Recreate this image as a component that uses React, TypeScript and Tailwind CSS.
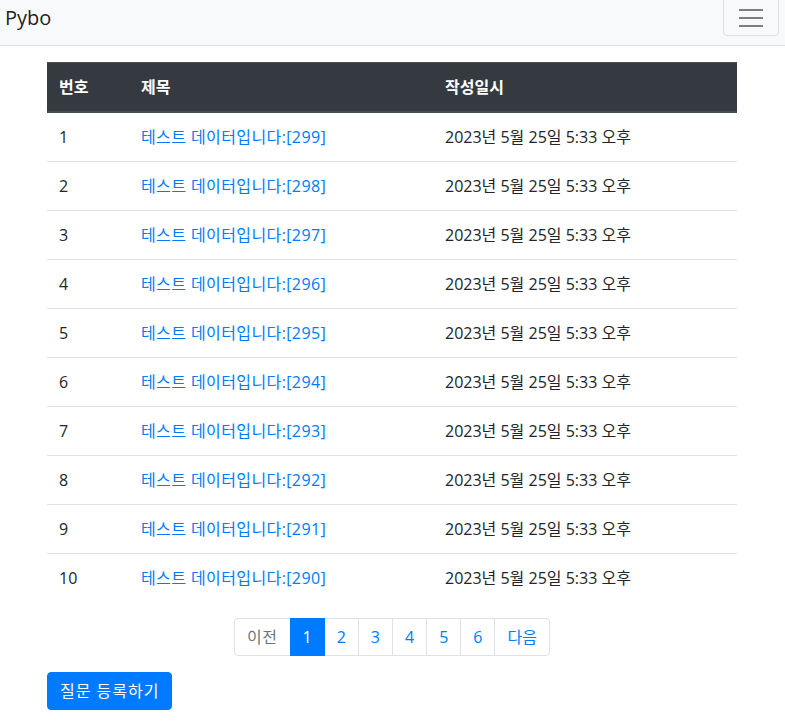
import React from 'react'

const rows = Array.from({ length: 10 }, (_, i) => ({
  no: i + 1,
  subject: `테스트 데이터입니다:[${299 - i}]`,
  date: '2023년 5월 25일 5:33 오후',
}))

const pages = ['1', '2', '3', '4', '5', '6']

export default function App() {
  return (
    <div className="min-h-screen bg-white text-[#212529] text-base leading-6 [font-family:'Open_Sans','Noto_Sans_CJK_KR',sans-serif]">
      {/* Navbar (scrolled a little) */}
      <div className="h-[46px] bg-[#f8f9fa] border-b border-[#dfdfdf] flex items-start justify-between pl-[5px] pr-[6px] overflow-hidden">
        <a className="text-xl leading-[30px] mt-[3px] text-black/90">Pybo</a>
        <button className="w-[56px] h-[40px] -mt-[4px] border border-black/10 rounded flex flex-col items-center justify-center gap-[6px] pt-[4px]">
          <span className="block w-[24px] h-[2px] bg-[#7f7f7f]" />
          <span className="block w-[24px] h-[2px] bg-[#7f7f7f]" />
          <span className="block w-[24px] h-[2px] bg-[#7f7f7f]" />
        </button>
      </div>

      <div className="w-[690px] ml-[47px] mt-4">
        <table className="w-full border-collapse mb-4">
          <thead>
            <tr className="bg-[#343a40] text-white">
              <th className="w-[82px] text-left font-bold px-3 py-3 border-t border-b-2 border-[#454d55]">번호</th>
              <th className="w-[304px] text-left font-bold px-3 py-3 border-t border-b-2 border-[#454d55]">제목</th>
              <th className="text-left font-bold px-3 py-3 border-t border-b-2 border-[#454d55]">작성일시</th>
            </tr>
          </thead>
          <tbody>
            {rows.map(r => (
              <tr key={r.no}>
                <td className="px-3 py-3 border-t border-[#dee2e6]">{r.no}</td>
                <td className="px-3 py-3 border-t border-[#dee2e6]">
                  <a className="text-[#007bff] tracking-[0.4px]">{r.subject}</a>
                </td>
                <td className="px-3 py-3 border-t border-[#dee2e6]">{r.date}</td>
              </tr>
            ))}
          </tbody>
        </table>

        <ul className="flex justify-center mb-4">
          <li>
            <span className="block px-3 py-2 leading-5 border border-[#dee2e6] rounded-l text-[#6c757d] bg-white tracking-[0.5px]">이전</span>
          </li>
          {pages.map((p, i) => (
            <li key={p} className="-ml-px">
              <a
                className={
                  i === 0
                    ? 'block px-3 py-2 leading-5 border border-[#007bff] bg-[#007bff] text-white relative'
                    : 'block px-3 py-2 leading-5 border border-[#dee2e6] bg-white text-[#007bff]'
                }
              >
                {p}
              </a>
            </li>
          ))}
          <li className="-ml-px">
            <a className="block px-3 py-2 leading-5 border border-[#dee2e6] rounded-r bg-white text-[#007bff]">다음</a>
          </li>
        </ul>

        <button className="h-[38px] px-3 rounded bg-[#007bff] text-white border border-[#007bff] tracking-[1px]">질문 등록하기</button>
      </div>
    </div>
  )
}
